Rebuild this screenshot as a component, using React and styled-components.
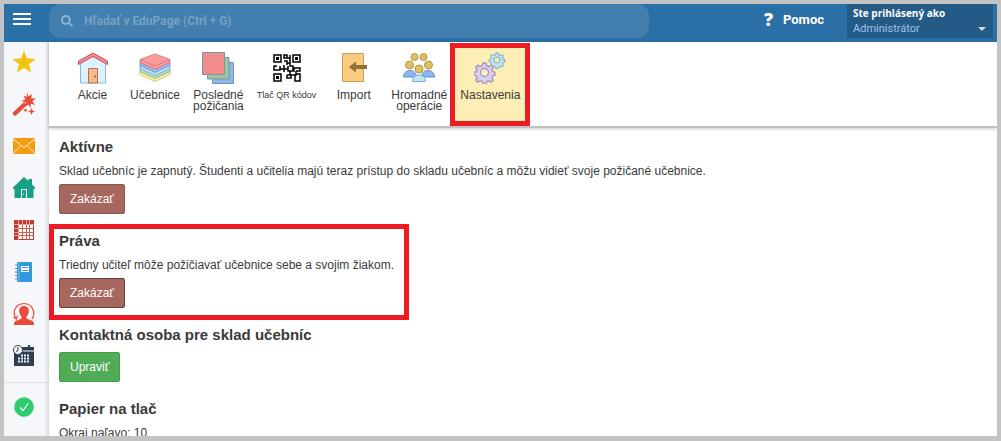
import React, { useState } from "react";
import styled, { createGlobalStyle, css } from "styled-components";
import { FaSearch } from "react-icons/fa";

const sideLinks = [
  { name: "Obľúbené", icon: <StarIcon /> },
  { name: "Sprievodca", icon: <WandIcon /> },
  { name: "Správy", icon: <MailIcon /> },
  { name: "Domov", icon: <HomeIcon /> },
  { name: "Rozvrh", icon: <TimetableIcon /> },
  { name: "Triedna kniha", icon: <NotebookIcon /> },
  { name: "Suplovanie", icon: <PersonIcon /> },
  { name: "Dochádzka", icon: <CalendarIcon /> },
];

const tools = [
  { label: "Akcie", icon: <HouseIcon /> },
  { label: "Učebnice", icon: <BooksIcon /> },
  { label: "Posledné požičania", icon: <SheetsIcon /> },
  { label: "Tlač QR kódov", icon: <QrIcon />, small: true },
  { label: "Import", icon: <ImportIcon /> },
  { label: "Hromadné operácie", icon: <GroupIcon /> },
  { label: "Nastavenia", icon: <GearsIcon />, active: true },
];

function App() {
  const [query, setQuery] = useState("");

  return (
    <Frame>
      <GlobalStyle />
      <Header>
        <MenuButton aria-label="Menu">
          <i />
          <i />
          <i />
        </MenuButton>
        <Search>
          <FaSearch size={12} />
          <input
            type="text"
            aria-label="Hľadať"
            placeholder="Hľadať v EduPage (Ctrl + G)"
            value={query}
            onChange={(e) => setQuery(e.target.value)}
          />
        </Search>
        <Help href="#">
          <b>?</b>
          Pomoc
        </Help>
        <Account>
          <strong>Ste prihlásený ako</strong>
          <span>
            Administrátor
            <Caret />
          </span>
        </Account>
      </Header>
      <Body>
        <Sidebar>
          {sideLinks.map((link) => (
            <SideLink key={link.name} href="#" aria-label={link.name}>
              {link.icon}
            </SideLink>
          ))}
          <Divider />
          <SideLink href="#" aria-label="Hotovo">
            <CheckIcon />
          </SideLink>
        </Sidebar>
        <Main>
          <Toolbar>
            {tools.map((tool) => (
              <Tool key={tool.label} $active={tool.active} $small={tool.small}>
                {tool.icon}
                <span>{tool.label}</span>
              </Tool>
            ))}
          </Toolbar>
          <Content>
            <Section>
              <h2>Aktívne</h2>
              <p>
                Sklad učebníc je zapnutý. Študenti a učitelia majú teraz prístup
                do skladu učebníc a môžu vidieť svoje požičané učebnice.
              </p>
              <Button>Zakázať</Button>
            </Section>
            <Section $marked>
              <h2>Práva</h2>
              <p>Triedny učiteľ môže požičiavať učebnice sebe a svojim žiakom.</p>
              <Button $dark>Zakázať</Button>
            </Section>
            <Section>
              <h2>Kontaktná osoba pre sklad učebníc</h2>
              <Button $green>Upraviť</Button>
            </Section>
            <Section>
              <h2>Papier na tlač</h2>
              <p>Okraj naľavo: 10</p>
            </Section>
          </Content>
        </Main>
      </Body>
    </Frame>
  );
}

export default App;

function StarIcon() {
  return (
    <svg width="24" height="24" viewBox="0 0 24 24">
      <path
        fill="#f1c40f"
        d="M12 .5l3 8 8.500.4-6.600 5.300 2.200 8.300L12 17.900 4.900 22.500l2.200-8.300L.5 8.900 9 8.500z"
      />
    </svg>
  );
}

function WandIcon() {
  return (
    <svg width="24" height="24" viewBox="0 0 24 24" fill="#e74c3c">
      <path d="M15 0l1.500 4.500L20 2l-.8 4.300L24 6.500l-3.600 2.700L23 13l-4.300-1.200.1 4.200-2.700-3.400L13.300 15l.7-4.500L9.500 9l4-1.700L11.400 3.500l3.400 1.600z" />
      <path d="M1 20.500L12 10l3 3L4 23.500C2.500 24.500-.3 22.200 1 20.500z" />
      <path d="M19.500 16l1 2.500 2.500 1-2.500 1-1 2.500-1-2.500-2.500-1 2.500-1zM13.500 16l.7 1.500 1.500.7-1.500.7-.7 1.500-.7-1.500-1.500-.7 1.500-.7z" />
    </svg>
  );
}

function MailIcon() {
  return (
    <svg width="24" height="24" viewBox="0 0 24 24">
      <path fill="#f39c12" d="M1 4h22v16H1z" />
      <path
        fill="none"
        stroke="#fdf0d8"
        strokeWidth="1"
        d="M1 5l11 8.500L23 5M1 19.500l8-8M23 19.500l-8-8"
      />
    </svg>
  );
}

function HomeIcon() {
  return (
    <svg width="24" height="24" viewBox="0 0 24 24">
      <path
        fill="#16a085"
        d="M12 1l4.500 4V3H20v5.200l3 3.300V13h-1.500v9h-19v-9H1v-1.500z"
      />
      <path fill="none" stroke="#fff" d="M9.500 22v-8.500h5V22" />
      <path stroke="#fff" d="M11 18h1" />
    </svg>
  );
}

function TimetableIcon() {
  return (
    <svg width="24" height="24" viewBox="0 0 24 24">
      <path fill="#c0392b" d="M2 2h20v20H2z" />
      <path fill="#fff" d="M7 7h14v14H7z" />
      <path
        fill="none"
        stroke="#cf6157"
        d="M10.500 7v14M14.500 7v14M17.500 7v14M7 10.500h14M7 14.500h14M7 17.500h14"
      />
      <path
        fill="none"
        stroke="#ecc5c2"
        strokeWidth=".8"
        d="M6.500 2v20M10.500 2v4M14.500 2v4M17.500 2v4M2 6.500h20M2 10.500h4M2 14.500h4M2 17.500h4"
      />
    </svg>
  );
}

function NotebookIcon() {
  return (
    <svg width="24" height="24" viewBox="0 0 24 24">
      <rect x="5" y="2" width="15" height="20" rx="1" fill="#3498db" />
      <path
        stroke="#3498db"
        strokeWidth="1.200"
        d="M3 5h4M3 8.500h4M3 12h4M3 15.500h4M3 19h4"
      />
      <path stroke="#f5f7fa" strokeWidth=".4" d="M6.800 3v18" />
      <path fill="#fff" d="M9 6h8v6H9z" />
      <path stroke="#3498db" d="M10 7.500h6M10 10.500h6" />
    </svg>
  );
}

function PersonIcon() {
  return (
    <svg width="24" height="24" viewBox="0 0 24 24">
      <path
        fill="#e74c3c"
        d="M12 4c3.500 0 5 2.300 4.800 5.200-.1 2.500-1 4-2.300 5.300v2l6 2.500c1 .6 1.500 2 1.500 4H2c0-2 .5-3.400 1.500-4l6-2.500v-2C8.200 13.200 7.300 11.700 7.200 9.200 7 6.300 8.500 4 12 4z"
      />
      <path
        fill="none"
        stroke="#e74c3c"
        strokeWidth="1.200"
        d="M20 17c4-6 1-15-8-15.500C3 2 0 10 4 16.500M1.500 15l3 2 1-3.500"
      />
    </svg>
  );
}

function CalendarIcon() {
  return (
    <svg width="24" height="24" viewBox="0 0 24 24">
      <path fill="#2c3e50" d="M2 3h20v19H2z" />
      <path fill="#f5f7fa" d="M10 6.500h12v1H10z" />
      <path stroke="#2c3e50" strokeWidth="2" d="M17 1v5" />
      <circle cx="6" cy="6" r="4.500" fill="#f5f7fa" stroke="#2c3e50" />
      <path fill="none" stroke="#2c3e50" d="M6 3v3.500L4 7.500" />
      <path
        stroke="#f5f7fa"
        strokeWidth="1.800"
        strokeDasharray="2 1"
        d="M9 11.500h9M6 14.500h12M6 17.500h12"
      />
    </svg>
  );
}

function CheckIcon() {
  return (
    <svg width="24" height="24" viewBox="0 0 24 24">
      <circle cx="12" cy="12" r="9.500" fill="#2ecc71" />
      <circle
        cx="12"
        cy="12"
        r="9.500"
        fill="none"
        stroke="#2ecc71"
        strokeDasharray="1.500 1.500"
      />
      <path
        fill="none"
        stroke="#fff"
        strokeWidth="1.200"
        d="M8 12.500l3 3 5.500-7.500"
      />
    </svg>
  );
}

function HouseIcon() {
  return (
    <svg width="32" height="32" viewBox="0 0 32 32">
      <path fill="#def2fd" stroke="#8bb9df" d="M3.500 10L16 2l12.500 8v21h-25z" />
      <path
        fill="#f28b90"
        stroke="#c8505a"
        d="M16 1L1.500 9v3.500L16 4.500l14.500 8V9z"
      />
      <path fill="#fcb98a" stroke="#ad7256" d="M11.500 16.500h9V31h-9z" />
      <circle cx="18" cy="24.500" r="1" fill="#8c5b43" />
    </svg>
  );
}

function BooksIcon() {
  const layers = [
    { y: 12, fill: "#fff0a0", stroke: "#c9b779" },
    { y: 9, fill: "#b5dfb0", stroke: "#7fb088" },
    { y: 6, fill: "#c4e3fb", stroke: "#6d9fd7" },
    { y: 3, fill: "#8fbdf5", stroke: "#5f8fcb" },
    { y: 0, fill: "#fd9a9c", stroke: "#d66b73" },
  ];
  return (
    <svg width="32" height="32" viewBox="0 0 32 32">
      {layers.map((layer) => (
        <path
          key={layer.y}
          transform={"translate(0 " + layer.y + ")"}
          fill={layer.fill}
          stroke={layer.stroke}
          strokeWidth=".8"
          d="M1 7.500L16 2l15 5.500v3L16 17.500 1 10.500z"
        />
      ))}
      <path
        fill="none"
        stroke="#d66b73"
        strokeWidth=".8"
        d="M1 7.500l15 6.500 15-6.500"
      />
    </svg>
  );
}

function SheetsIcon() {
  return (
    <svg width="32" height="32" viewBox="0 0 32 32" stroke="#7d93a8">
      <path fill="#8cb6f0" d="M10.500 10.500h21v21h-21z" />
      <path fill="#9cc79c" d="M5.500 5.500h21.500v21.500H5.500z" />
      <path fill="#f28c8c" d="M.5.500h22v22H.5z" />
    </svg>
  );
}

function QrIcon() {
  return (
    <svg width="32" height="32" viewBox="0 0 32 32">
      <g fill="none" stroke="#000" strokeWidth="1.500">
        <path d="M3 3h7v7H3zM22 3h7v7h-7zM3 22h7v7H3z" />
        <path d="M13 3h3v3h-3zM16 6h3V3M13 9h3v4M19 6v5h-3M19 11v3h3v4M13 13v4H9v-3M6 14H3v4h6v-4M9 17h8M13 17v3M17 14v5h6v-3h6v3h-4M16 23h3v-4M16 23v3h4v-3h5v-4M25 22h4v7h-5v-6" />
      </g>
      <path d="M5 5h3v3H5zM24 5h3v3h-3zM5 24h3v3H5z" />
    </svg>
  );
}

function ImportIcon() {
  return (
    <svg width="32" height="32" viewBox="0 0 32 32">
      <path fill="#f8cb80" stroke="#c9a25d" d="M4.500 1.500h21v28h-21z" />
      <path fill="#917039" d="M11 15l7-5.500V13h11v4H18v3.500z" />
    </svg>
  );
}

function GroupIcon() {
  return (
    <svg width="32" height="32" viewBox="0 0 32 32">
      <path
        fill="#8cb6f0"
        stroke="#5f8fcb"
        d="M.5 25c0-4 3-6.500 6.500-6.500s6.500 2.500 6.500 6.500zM18.500 25c0-4 3-6.500 6.500-6.500s6.500 2.500 6.500 6.500z"
      />
      <path
        fill="#c1e4fb"
        stroke="#7cafd8"
        d="M9.500 29.500c0-4 3-6.500 6.500-6.500s6.500 2.500 6.500 6.500z"
      />
      <g fill="#dfc165" stroke="#b59741">
        <circle cx="11.500" cy="5" r="3.500" />
        <circle cx="20.500" cy="5" r="3.500" />
        <circle cx="6.500" cy="13" r="4" />
        <circle cx="25.500" cy="13" r="4" />
        <circle cx="16" cy="17" r="4" />
      </g>
    </svg>
  );
}

function Gear({ x, y, scale, fill, stroke }) {
  return (
    <g transform={`translate(${x} ${y}) scale(${scale})`}>
      <path
        fill={fill}
        fillRule="evenodd"
        stroke={stroke}
        strokeWidth="1.300"
        strokeLinejoin="round"
        d="M-1.500-9.500h3l.7 2.700 2.200.9 2.400-1.500 2.100 2.100-1.500 2.400.8 2 2.300.6v3l-2.300.7-.9 2 1.500 2.300-2.100 2.100-2.300-1.500-2.200.9-.7 2.300h-3l-.7-2.300-2.200-.9-2.300 1.500-2.100-2.100 1.500-2.300-.9-2-2.300-.7v-3l2.300-.6.8-2-1.500-2.400 2.100-2.100 2.400 1.500 2.200-.9zM4 0a4 4 0 1 0-8 0 4 4 0 1 0 8 0z"
      />
    </g>
  );
}

function GearsIcon() {
  return (
    <svg width="32" height="32" viewBox="0 0 32 32">
      <Gear x={23} y={8} scale={0.75} fill="#bfe5f3" stroke="#71a8c2" />
      <Gear x={10.5} y={20.5} scale={1} fill="#d9cff0" stroke="#a294bd" />
    </svg>
  );
}

const GlobalStyle = createGlobalStyle`
  * {
    box-sizing: border-box;
  }

  body {
    margin: 0;
    color: #3b3b3b;
    font-family: "Liberation Sans", Arial, sans-serif;
    font-size: 12px;
  }

  button,
  input {
    font-family: inherit;
  }

  svg {
    display: block;
    flex-shrink: 0;
  }
`;

const Frame = styled.div`
  height: 100vh;
  display: flex;
  flex-direction: column;
  overflow: hidden;
  border: 4px solid #c3c3c3;
  border-bottom-width: 5px;
  background: #fff;
`;

const Header = styled.header`
  display: flex;
  align-items: flex-start;
  flex-shrink: 0;
  height: 38px;
  padding-right: 4px;
  background: #2a6fa5;
`;

const MenuButton = styled.button`
  display: flex;
  flex-direction: column;
  gap: 3px;
  width: 45px;
  padding: 9px 18px 0 9px;
  border: 0;
  background: none;
  cursor: pointer;

  i {
    height: 2px;
    background: #fff;
  }
`;

const Search = styled.label`
  display: flex;
  align-items: center;
  gap: 11px;
  flex: 0 1 600px;
  height: 34px;
  padding: 0 12px;
  border-radius: 12px;
  background: #437fae;
  color: #8db2d0;

  input {
    flex: 1;
    padding: 0;
    border: 0;
    outline: 0;
    background: none;
    color: #fff;
    font-size: 12px;
    font-family: Roboto, sans-serif;
    font-weight: bold;
  }

  input::placeholder {
    color: #75a1c5;
    opacity: 1;
  }
`;

const Help = styled.a`
  display: flex;
  align-items: center;
  gap: 10px;
  height: 30px;
  margin-left: auto;
  margin-right: 23px;
  color: #fff;
  font-family: Roboto, sans-serif;
  font-size: 13px;
  font-weight: bold;
  text-decoration: none;

  b {
    font-family: "Open Sans", sans-serif;
    font-size: 18px;
    font-weight: 800;
  }
`;

const Account = styled.button`
  display: flex;
  flex-direction: column;
  gap: 2px;
  width: 146px;
  height: 34px;
  padding: 3px 7px 0 6px;
  border: 0;
  background: #235a86;
  text-align: left;
  cursor: pointer;

  strong {
    color: #fff;
    font-family: "Open Sans", sans-serif;
    font-size: 10px;
    line-height: 13px;
  }

  span {
    display: flex;
    align-items: center;
    justify-content: space-between;
    color: #9fc4e8;
    font-family: Roboto, sans-serif;
    font-size: 11px;
    line-height: 13px;
  }
`;

const Caret = styled.i`
  border: 4px solid transparent;
  border-top-color: #cfdbe6;
  border-bottom: 0;
`;

const Body = styled.div`
  display: flex;
  flex: 1;
  min-height: 0;
`;

const Sidebar = styled.nav`
  display: flex;
  flex-direction: column;
  flex: 0 0 45px;
  background: #f5f7fa;
  box-shadow: inset -4px 0 4px -3px #c8cacd;
`;

const SideLink = styled.a`
  display: flex;
  align-items: center;
  flex-shrink: 0;
  height: 42px;
  padding: 0 0 2px 8px;
`;

const Divider = styled.hr`
  flex-shrink: 0;
  width: 100%;
  height: 1px;
  margin: 4px 0;
  border: 0;
  background: #dcdfe2;
`;

const Main = styled.main`
  flex: 1;
  min-width: 0;
`;

const Toolbar = styled.div`
  display: flex;
  align-items: flex-start;
  gap: 3px;
  height: 86px;
  padding: 6px 14px;
  border-bottom: 2px solid #c0c0c0;
  box-shadow: 0 1px 3px rgba(0, 0, 0, 0.2);
`;

const Tool = styled.button`
  display: flex;
  flex-direction: column;
  align-items: center;
  gap: 6px;
  width: min-content;
  min-width: 59px;
  height: 73px;
  padding: 4px 5px;
  border: 0;
  background: none;
  color: #3b3b3b;
  font-size: 12px;
  line-height: 11px;
  cursor: pointer;

  ${(props) =>
    props.$small &&
    css`
      font-size: 9px;
      white-space: nowrap;
    `}

  ${(props) =>
    props.$active &&
    css`
      background: #fdeeb5;
      outline: 5px solid #ed1c24;
    `}
`;

const Content = styled.div`
  padding: 9px 10px 0;
`;

const Section = styled.section`
  position: relative;
  width: fit-content;
  margin-bottom: 17px;

  h2 {
    margin: 0 0 7px;
    font-size: 15px;
    line-height: 20px;
  }

  p {
    margin: 0 0 6px;
    line-height: 14px;
  }

  ${(props) =>
    props.$marked &&
    css`
      &::after {
        content: "";
        position: absolute;
        inset: -7px -15px -12px -10px;
        border: 5px solid #ed1c24;
        pointer-events: none;
      }
    `}
`;

const Button = styled.button`
  display: block;
  height: 30px;
  padding: 0 10px;
  border: 1px solid ${(props) => (props.$green ? "#449d48" : props.$dark ? "#6b403a" : "#8e5650")};
  border-radius: 2px;
  background: ${(props) => (props.$green ? "#52ac56" : "#a5675e")};
  color: #fff;
  font-size: 12px;
  cursor: pointer;
`;
